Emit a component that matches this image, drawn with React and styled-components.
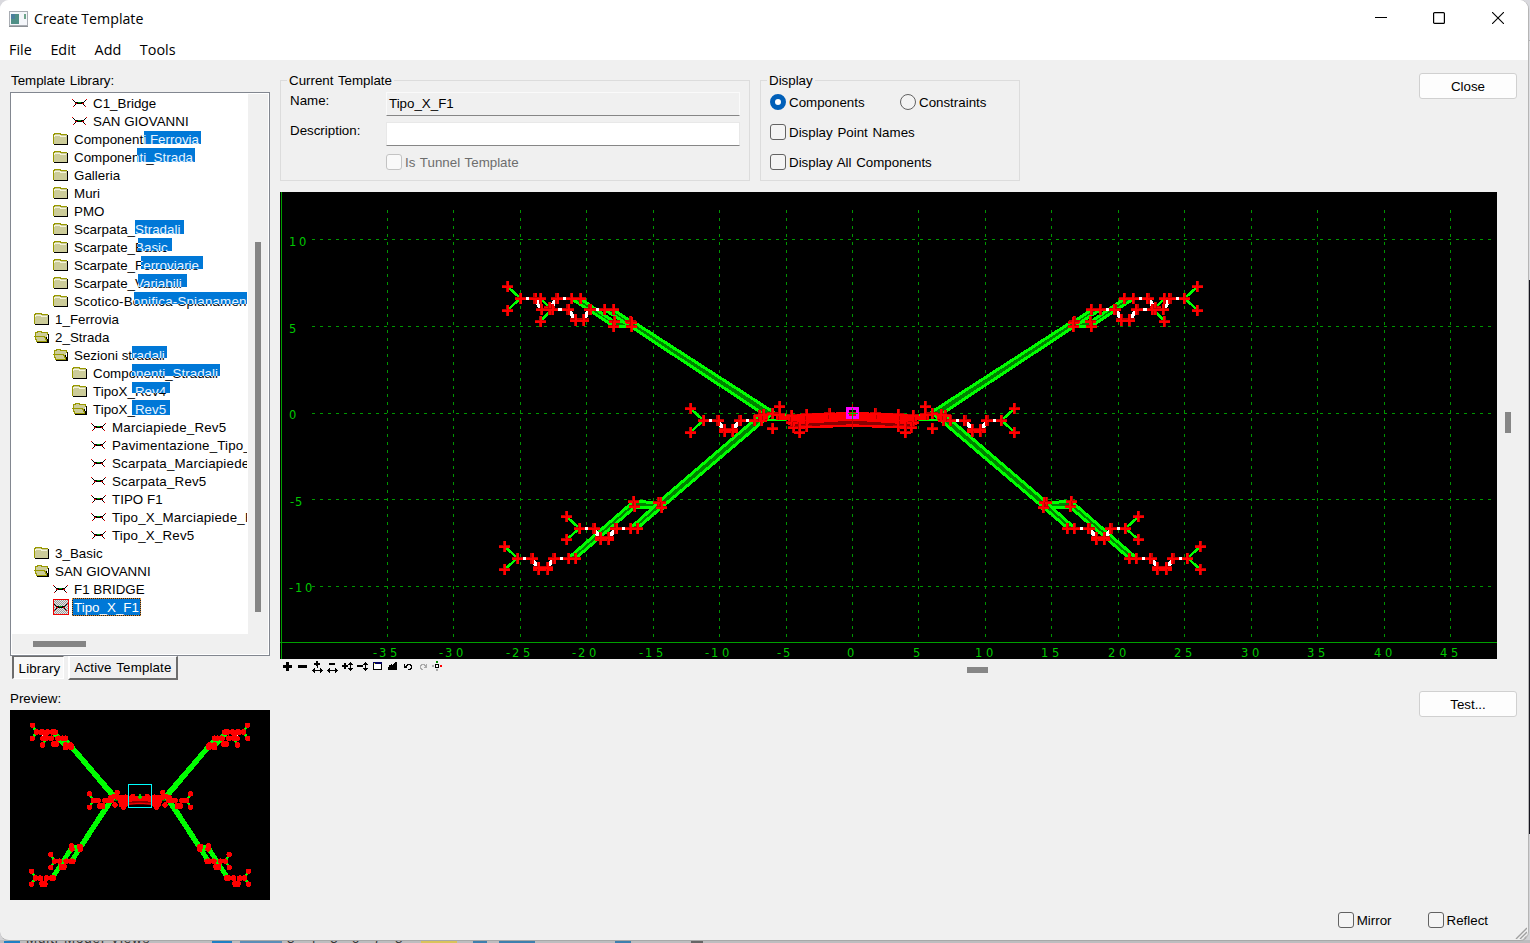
import React from "react";
import styled, { createGlobalStyle, css } from "styled-components";

const GlobalStyle = createGlobalStyle`
  *, *::before, *::after { box-sizing: border-box; }
  html, body { margin: 0; padding: 0; }
  body {
    width: 1530px;
    height: 943px;
    overflow: hidden;
    background: #c9c9cd;
    color: #000;
    font-family: "Liberation Sans", Arial, sans-serif;
    font-size: 13.33px;
    line-height: 17px;
    word-spacing: 1px;
  }
`;

/* ---------- window frame ---------- */

const Desktop = styled.div`
  position: relative;
  width: 1530px;
  height: 943px;
  overflow: hidden;
  background: linear-gradient(#d9d9de 0 40px, #b4b4b8 40px 41px, #dfdfe2 41px 280px, #15151f 280px 834px, #d3d3d6 834px);
`;

const Window = styled.div`
  position: relative;
  display: flex;
  flex-direction: column;
  width: 1529px;
  height: 941px;
  border-right: 1px solid #b5b5b5;
  border-bottom: 1px solid #a8a8a8;
  border-radius: 9px;
  overflow: hidden;
  background: #f0f0f0;
`;

const TitleBar = styled.header`
  display: flex;
  align-items: center;
  height: 37px;
  padding-left: 9px;
  padding-right: 1px;
  background: #fff;
  font-family: "Open Sans", "Noto Sans", sans-serif;
  font-size: 14.2px;
  word-spacing: 0;
`;

const Title = styled.span`
  flex: 1;
  margin-left: 6px;
  white-space: nowrap;
`;

const Caption = styled.span`
  width: 58.5px;
  height: 37px;
  padding-bottom: 1px;
  display: flex;
  align-items: center;
  justify-content: center;
`;

const MenuBar = styled.nav`
  display: flex;
  gap: 18.6px;
  height: 23px;
  padding: 3px 9px 0;
  background: #fff;
  font-family: "Open Sans", "Noto Sans", sans-serif;
  font-size: 14.4px;
  line-height: 19px;
`;

const Content = styled.main`
  flex: 1;
  display: flex;
  gap: 10px;
  padding: 12px 11px 0 10px;
`;

const Sidebar = styled.aside`
  display: flex;
  flex-direction: column;
  width: 260px;
  flex: none;
`;

const SectionName = styled.div`
  height: 17px;
  margin: ${(p) => p.$margin || "0"};
  white-space: nowrap;
`;

/* ---------- library tree ---------- */

const TreeBox = styled.div`
  display: grid;
  grid-template-columns: 236px 20px;
  grid-template-rows: 540px 20px;
  height: 564px;
  border: 1px solid #828790;
  padding: 1px;
  background: #fff;
`;

const TreeView = styled.div`
  overflow: hidden;
  margin-right: 1px;
  word-spacing: 0;
`;

const VTrack = styled.div`
  display: flex;
  justify-content: center;
  background: #f0f0f0;
  padding-top: 148px;
`;

const HTrack = styled.div`
  grid-column: 1 / 3;
  display: flex;
  align-items: center;
  background: #f0f0f0;
  padding-left: 21px;
`;

const Thumb = styled.span`
  width: ${(p) => p.$w}px;
  height: ${(p) => p.$h}px;
  background: #858585;
`;

const TreeRow = styled.div`
  display: flex;
  align-items: center;
  height: 18px;
  padding-left: ${(p) => 3 + p.$level * 19}px;
  white-space: nowrap;
`;

const Label = styled.span`
  position: relative;
  height: 18px;
  line-height: 19.4px;
  margin-left: 3px;
  padding-left: 2px;
  padding-right: 2px;
  letter-spacing: ${(p) => (p.$wide ? 0.2 : 0.03)}px;

  ${(p) =>
    p.$ghost &&
    css`
      &::after {
        content: attr(data-label);
        position: absolute;
        left: 0;
        top: 0;
        width: 260px;
        height: 18px;
        padding-left: 2px;
        background: #0078d7;
        color: #e8f4ff;
        clip-path: inset(
          ${p.$ghost[2]}px ${260 - p.$ghost[1]}px ${18 - p.$ghost[3]}px ${p.$ghost[0]}px
        );
      }
    `}

  ${(p) =>
    p.$selected &&
    css`
      background: #0078d7;
      color: #fff;
      outline: 1px dotted #e08a28;
      outline-offset: -1px;
      box-shadow: inset 0 0 0 1px #10243a;
    `}
`;

const IconSlot = styled.span`
  display: flex;
  width: 16px;
  height: 16px;
  ${(p) =>
    p.$selected &&
    css`
      box-shadow: inset 0 0 0 1px #f00000;
      background: repeating-conic-gradient(#9a9a9a 0 25%, #e6e6e6 0 50%) 0 0 / 2px 2px;
    `}
`;

const Tabs = styled.div`
  display: flex;
  gap: 4px;
  height: 24px;
  padding-left: 2px;
`;

const Tab = styled.div`
  height: ${(p) => (p.$pressed ? 23 : 24)}px;
  width: ${(p) => p.$w}px;
  padding-left: ${(p) => (p.$pressed ? 2 : 0)}px;
  text-align: center;
  white-space: nowrap;
  letter-spacing: 0.15px;
  line-height: ${(p) => (p.$pressed ? 23 : 21)}px;
  ${(p) =>
    p.$pressed
      ? css`
          background: #f8f8f8;
          border-left: 2px solid #6d6d6d;
          border-top: 1px solid #6d6d6d;
          border-right: 1px solid #fff;
          border-bottom: 1px solid #fff;
        `
      : css`
          background: #f0f0f0;
          border-left: 2px solid #fff;
          border-top: 1px solid #fff;
          border-right: 2px solid #6d6d6d;
          border-bottom: 2px solid #6d6d6d;
        `}
`;

const Preview = styled.svg`
  display: block;
  width: 260px;
  height: 190px;
  background: #000;
`;

/* ---------- right pane ---------- */

const Pane = styled.section`
  flex: 1;
  display: flex;
  flex-direction: column;
  min-width: 0;
`;

const TopRow = styled.div`
  display: flex;
  align-items: flex-start;
  gap: 10px;
  height: 120px;
`;

const Group = styled.fieldset`
  width: ${(p) => p.$w}px;
  height: 109px;
  margin: 0;
  padding: 0 0 0 9px;
  border: 1px solid #dcdcdc;
  min-width: 0;
`;

const Legend = styled.legend`
  height: 17px;
  margin-left: -3px;
  padding: 0 2px;
`;

const Field = styled.div`
  display: flex;
  align-items: flex-start;
  margin-top: ${(p) => p.$top}px;
  height: 24px;
`;

const FieldName = styled.span`
  width: 96px;
`;

const Input = styled.div`
  width: 354px;
  height: 24px;
  padding: 0 2px;
  line-height: 22px;
  background: ${(p) => (p.$readOnly ? "#f0f0f0" : "#fff")};
  border: 1px solid ${(p) => (p.$readOnly ? "#fafafa" : "#e8e8e8")};
  border-bottom: 1px solid #868686;
`;

const Options = styled.div`
  display: flex;
  height: 16px;
  margin-top: ${(p) => p.$top || 0}px;
  margin-left: ${(p) => p.$left || 0}px;
`;

const Option = styled.label`
  display: flex;
  align-items: center;
  gap: 3px;
  width: ${(p) => (p.$w ? p.$w + "px" : "auto")};
  white-space: nowrap;
  color: ${(p) => (p.$disabled ? "#6d6d6d" : "#000")};
`;

const Box = styled.span`
  width: 16px;
  height: 16px;
  flex: none;
  border: 1px solid ${(p) => (p.$disabled ? "#c3c3c3" : "#626262")};
  border-radius: 3px;
  background: ${(p) => (p.$disabled ? "#f9f9f9" : "#f4f4f4")};
`;

const Radio = styled.span`
  width: 16px;
  height: 16px;
  flex: none;
  border-radius: 50%;
  border: ${(p) => (p.$on ? "5px solid #005fb8" : "1px solid #626262")};
  background: ${(p) => (p.$on ? "#fff" : "#f3f3f3")};
`;

const Button = styled.div`
  width: 98px;
  height: 26px;
  margin: ${(p) => p.$margin};
  border: 1px solid #d0d0d0;
  border-radius: 3px;
  background: #fdfdfd;
  text-align: center;
  line-height: 25px;
`;

const CanvasRow = styled.div`
  display: flex;
  align-items: center;
  gap: 8px;
  height: 467px;
`;

const Plot = styled.svg`
  display: block;
  width: 1217px;
  height: 467px;
  background: #000;
  flex: none;
`;

const ToolRow = styled.div`
  display: flex;
  height: 15px;
`;

const Tools = styled.div`
  display: flex;
  width: 687px;
`;

const HGrip = styled.span`
  width: 21px;
  height: 6px;
  margin-top: 8px;
  background: #868686;
`;

const VGrip = styled.span`
  width: 6px;
  height: 21px;
  margin-bottom: 6px;
  background: #868686;
`;

const Footer = styled.div`
  display: flex;
  justify-content: flex-end;
  gap: 36px;
  margin-top: auto;
  padding: 0 29px 12px 0;
  height: 28px;
`;

const SizeGrip = styled.svg`
  position: absolute;
  right: 1px;
  bottom: 1px;
`;

const Behind = styled.div`
  position: absolute;
  left: 0;
  bottom: 0;
  width: 1530px;
  height: 3px;
  overflow: hidden;
  background: #bdbdbf;
  display: flex;
  align-items: flex-end;
  font-size: 13.33px;
  color: #333;
`;

const BehindText = styled.span`
  width: ${(p) => p.$w}px;
  height: 11px;
  margin-left: ${(p) => p.$left}px;
  letter-spacing: ${(p) => p.$spacing || 0}px;
  line-height: 14px;
  white-space: nowrap;
`;

const BehindMark = styled.span`
  width: ${(p) => p.$w}px;
  height: 2px;
  margin-left: ${(p) => p.$left}px;
  background: ${(p) => p.$c};
`;

/* ---------- icons ---------- */

const FolderIcon = () => (
  <svg width="16" height="16" shapeRendering="crispEdges">
    <path d="M0 3H2V2H7V3H8V4H14V13H0Z" fill="#cccc99" />
    <path d="M0.5 13V3.5H1.5V2.5H7.5V3.5H13.5" fill="none" stroke="#999900" />
    <path d="M1.5 6V4.5H7.5V5.5H12.5" fill="none" stroke="#f4f4dc" />
    <path d="M14.5 4V13.5H1" fill="none" stroke="#000" />
  </svg>
);

const OpenFolderIcon = () => (
  <svg width="16" height="16" shapeRendering="crispEdges">
    <path d="M1 4H3V2H7V3H13V13H3L1 10Z" fill="#cccc99" />
    <path d="M1.5 7V3.5H3.5V2.5H7.5V3.5H13.5V6" fill="none" stroke="#999900" />
    <path d="M0 7.5H10.5V8.5H11.5V10.5H12.5V12.5H2.5V10.5H1.5V8.5H0.5" fill="none" stroke="#999900" />
    <path d="M14.5 5V13.5H3M12.5 8V10M13.5 10V13" fill="none" stroke="#000" />
  </svg>
);

const TemplateIcon = () => (
  <svg width="16" height="16" viewBox="0 -1 16 16" shapeRendering="crispEdges">
    <path d="M1 4.5H2M2 5.5H3M3 6.5H5M5 6.5H10M10 6.5H12M12 5.5H13M13 4.5H14M4 7.5H11M3 8.5H4M2 9.5H3M11 8.5H12M12 9.5H13" stroke="#000" />
    <path d="M0 3.5H1M14 3.5H15M1 10.5H2M13 10.5H14M3 7.5H5M10 7.5H12" stroke="#e00000" />
    <path d="M6 6.5H9" stroke="#00a000" />
  </svg>
);

const AppIcon = () => (
  <svg width="19" height="16">
    <rect x="0.5" y="0.5" width="18" height="14" fill="#f4f6fa" stroke="#a9adb3" />
    <rect x="2" y="3" width="8" height="10" fill="#4f8f86" />
    <rect x="2" y="3" width="4" height="5" fill="#4a7f9c" />
    <rect x="15" y="3" width="2" height="5" fill="#6fa58c" />
    <path d="M0 15.5H19" stroke="#8b8f94" />
  </svg>
);

const HArrow = () => (
  <path d="M2 11H3V10H4V9H5V11H10V9H11V10H12V11H13V12H12V13H11V14H10V12H5V14H4V13H3V12H2Z" fill="#000" stroke="none" />
);
const VArrow = () => (
  <path d="M10 3H11V4H12V5H13V6H11V9H13V10H12V11H11V12H10V11H9V10H8V9H10V6H8V5H9V4H10Z" fill="#000" stroke="none" />
);

const toolIcons = [
  <path d="M7.5 3V12M3 7.5H12" stroke="#000" strokeWidth="3" />,
  <path d="M3 7.5H12" stroke="#000" strokeWidth="3" />,
  <g stroke="#000" fill="none">
    <path d="M7 2V7M4 5H10" strokeWidth="2" />
    <path d="M7.5 7V9" />
    <HArrow />
  </g>,
  <g stroke="#000" fill="none">
    <path d="M4 5H10" strokeWidth="2" />
    <HArrow />
  </g>,
  <g stroke="#000" fill="none">
    <path d="M5 4V10M2 7H8" strokeWidth="2" />
    <VArrow />
  </g>,
  <g stroke="#000" fill="none">
    <path d="M2 7H8" strokeWidth="2" />
    <VArrow />
  </g>,
  <g>
    <rect x="3.5" y="3.5" width="8" height="7" fill="#fff" stroke="#000" />
    <path d="M3 4H12" stroke="#000060" strokeWidth="2" />
    <path d="M4 4.5H5" stroke="#ff0" />
  </g>,
  <path d="M3 11V8H4V6H6V5H7V6H8V5H9V4H10V3H12V11Z" fill="#000" />,
  <path d="M4.5 5V8.5H7M5 7.5H6V6.5H7V5.5H10V6.5H11V9.5H10V10.5H8" fill="none" stroke="#000" />,
  <path d="M11.5 5V8.5H9M10.5 7.5V6.5H9V5.5H6V6.5H5V9.5H6V10.5H8" fill="none" stroke="#aaa" />,
  <g>
    <rect x="5.5" y="5.5" width="3" height="3" fill="#fff" stroke="#000" />
    <path d="M6 2.5H8M6 3.5H8" stroke="#080" />
    <path d="M10 6.5H12M10 7.5H12" stroke="#f00" />
    <path d="M2 6.5H4M2 7.5H4M6 11.5H8M6 10.5H8" stroke="#aaa" />
  </g>,
];

/* ---------- cross-section geometry (left half, mirrored about x = 852.5) ---------- */

const AXIS = 852.5;

const points = [
  [507.5, 286.5], [507.5, 310], [520.5, 298.5], [534.5, 298.5], [535.5, 298.5], [540.5, 298.5],
  [556.5, 298.5], [557.5, 298.5], [571.5, 298.5], [580.5, 298.5], [541.5, 309.5], [549.5, 307.5],
  [549.5, 309.5], [552.5, 309.5], [540.5, 321.5], [567.5, 309.5], [568.5, 309.5], [575.5, 319.5], [583.5, 319.5],
  [575.5, 320.5], [583.5, 320.5],
  [589.5, 309.5], [590.5, 309.5], [604.5, 309.5], [613.5, 309.5], [614.5, 321.5], [613.5, 326.5], [630.5, 321.5],
  [631.5, 322.5], [631.5, 326.5],
  [504.5, 546.5], [504.5, 569.5], [517.5, 558.5], [531.5, 558.5], [532.5, 558.5], [538.5, 569.5], [547.5, 569.5],
  [538.5, 567.5], [547.5, 567.5], [553.5, 558.5], [554.5, 558.5], [568.5, 558.5], [575.5, 558.5],
  [566.5, 516.5], [566.5, 539.5], [579.5, 528.5], [593.5, 528.5], [594.5, 528.5], [600.5, 539.5],
  [608.5, 539.5], [600.5, 537.5], [608.5, 537.5], [615.5, 528.5], [616.5, 528.5], [630.5, 528.5], [637.5, 528.5],
  [633.5, 501.5], [634.5, 506.5], [658.5, 502.5], [660.5, 502.5], [661.5, 507.5],
  [690.5, 408.5], [690.5, 432.5], [703.5, 420.5], [717.5, 420.5], [718.5, 420.5], [724.5, 431.5],
  [732.5, 431.5], [724.5, 429.5], [732.5, 429.5], [739.5, 420.5], [740.5, 420.5], [754.5, 420.5], [761.5, 420.5],
  [759.5, 415.5], [763.5, 414.5], [772.5, 413.5], [772.5, 428.5], [779.5, 406.5], [779.5, 414.5],
  [791.5, 415.5], [791.5, 422.5], [793.5, 427.5], [799.5, 427.5], [799.5, 432.5], [806.5, 414.5], [806.5, 426.5],
  [829.5, 413.5],
];

const whites = [
  "520,298.5 535,298.5 541.5,309.5 550,309.5 556.5,298.5 571,298.5",
  "552,309.5 568,309.5 575.5,320 583.5,320 589.5,309.5 604,309.5",
  "517.5,558.5 531.5,558.5 538.5,568 547,568 553.5,558.5 568,558.5",
  "579.5,528.5 593.5,528.5 600.5,538.5 608.5,538.5 615.5,528.5 630,528.5",
  "703.5,420.5 717.5,420.5 724.5,430.5 732.5,430.5 739.5,420.5 754,420.5",
];

const branches = [
  "507.5,286.5 520.5,298.5 507.5,310",
  "540.5,298.5 552,309.5 540.5,321",
  "504.5,546.5 517.5,558 504.5,569.5",
  "566.5,516.5 579.5,528.5 566.5,539.5",
  "690.5,408.5 703.5,420.5 690.5,432",
];

const bands = [
  "571,298.5 613.5,326 631,326 630,321.5 614,321.5 580,298.5",
  "604.5,309.5 613,309.5 632,322 630,326",
  "632,321 774,412.5 768,417 630,326",
  "658,502.5 759,416 767,418 661,508",
  "633.5,501.5 568.5,558 576,558 635,507 661,508 658,502.5",
  "657,504 630,528.5 637,528.5 662,507",
];

const HalfSection = ({ small }) => (
  <g>
    {bands.map((b) => (
      <polygon key={b} points={b} fill={small ? "#00ff00" : "#008000"} stroke="#00ff00" strokeWidth={small ? 2.8 : 3} vectorEffect="non-scaling-stroke" />
    ))}
    {branches.map((b) => (
      <polyline key={b} points={b} fill="none" stroke="#00ff00" strokeWidth="2.4" vectorEffect="non-scaling-stroke" />
    ))}
    {whites.map((b) => {
      const q = b.split(" ");
      return (
        <g key={b} fill="none" stroke="#fff">
          <polyline points={b} strokeWidth={small ? 1 : 2.6} vectorEffect="non-scaling-stroke" />
          {!small && <path d={`M${q[1]}L${q[2]}M${q[3]}L${q[4]}`} strokeWidth="4" />}
        </g>
      );
    })}
    <path d="M764 415H790M764 419.5H786" stroke="#00ff00" strokeWidth="2" />
    <path d="M758 417.5H768M776 417.5H790" stroke="#f00" strokeWidth="4" />
    {points.map(([x, y], i) =>
      small ? (
        <ellipse key={i} cx={x} cy={y} rx="8.8" ry="4.9" fill="#f00" />
      ) : (
        <g key={i} fill="none">
          <path d={`M${x - 5.5} ${y}h11M${x} ${y - 5.5}v11`} stroke="#c00000" strokeWidth="2.8" />
          <path d={`M${x - 5.5} ${y + 0.5}h11M${x + 0.5} ${y - 5.5}v11`} stroke="#ff0000" strokeWidth="2" />
        </g>
      )
    )}
  </g>
);

const Section = ({ small }) => (
  <g>
    <polygon points="791,422 852.5,419 914,422 914,427 852.5,425 791,427" fill="#8b0000" />
    <polygon points="788,414 852.5,412 917,414 917,425 852.5,420.5 788,425" fill="#ff0000" />
    <polyline points="788,428 852.5,425.5 917,428" fill="none" stroke="#f00" strokeWidth="2.5" />
    <HalfSection small={small} />
    <g transform={`translate(${AXIS * 2} 0) scale(-1 1)`}>
      <HalfSection small={small} />
    </g>
  </g>
);

const vGrid = [];
for (let k = -7; k <= 9; k++) vGrid.push(k);

const axisText = (k) => {
  const t = Math.round(AXIS + k * 66.45 - 0.5);
  const n = k * 5;
  const s = String(n);
  const xs = s.length === 1 ? [t - 5] : s === "-5" ? [t - 9, t - 3] : n < 0 ? [t - 14, t - 8, t + 3] : [t - 10, t + 1];
  return { s, x: xs.join(" ") };
};

const TemplatePlot = () => (
  <Plot viewBox="280 192 1217 467">
    <g shapeRendering="crispEdges">
      {vGrid.map((k) => {
        const x = Math.round(AXIS + k * 66.45 - 0.5) + 0.5;
        return <path key={k} d={`M${x} 210V642`} stroke="#009600" strokeDasharray="3 5" />;
      })}
      {[239.5, 326.5, 413.5, 499.5, 586.5].map((y) => (
        <path key={y} d={`M312 ${y}H1493`} stroke="#009600" strokeDasharray="3 5" />
      ))}
      <path d="M280 642.5H1497M281.5 192V659" stroke="#00a000" />
      <Section />
      <path d="M852.5 404V429M829.5 408V413M875.5 408V413" stroke="#c00" />
      <rect x="847.5" y="408.5" width="10" height="9" fill="none" stroke="#ff00ff" strokeWidth="3" />
      <path d="M852.5 408V419M848 413.5H858" stroke="#00c000" strokeWidth="1" />
    </g>
    <g fill="#00c800" fontFamily="DejaVu Sans" fontSize="11.5" wordSpacing="0">
      {vGrid.map((k) => {
        const a = axisText(k);
        return <text key={k} x={a.x} y="657">{a.s}</text>;
      })}
      <text x="289 299" y="246">10</text>
      <text x="289" y="333">5</text>
      <text x="289" y="419">0</text>
      <text x="290 295" y="506">-5</text>
      <text x="289 295 305" y="592">-10</text>
    </g>
  </Plot>
);

const TemplatePreview = () => (
  <Preview viewBox="10 710 260 190">
    <g shapeRendering="crispEdges">
      <g transform={`translate(${140 - AXIS * 0.312} ${725.3 - 286.5 * 0.5615}) scale(0.312 0.5615)`}>
        <Section small />
      </g>
      <rect x="128.5" y="784.5" width="23" height="23" fill="none" stroke="#00ffff" />
      <path d="M140 794V799M138 796.5H142" stroke="#00e000" strokeWidth="2" />
    </g>
  </Preview>
);

/* ---------- tree data: kind, level, label, highlight [x1, x2, y1, y2], selected ---------- */

const rows = [
  ["t", 3, "C1_Bridge"],
  ["t", 3, "SAN GIOVANNI"],
  ["f", 2, "Componenti Ferrovia", [72, 129, 1, 14]],
  ["f", 2, "Componenti_Strada", [65, 123, 0, 14]],
  ["f", 2, "Galleria"],
  ["f", 2, "Muri"],
  ["f", 2, "PMO"],
  ["f", 2, "Scarpata_Stradali", [63, 112, 0, 14]],
  ["f", 2, "Scarpate_Basic", [66, 100, 0, 13]],
  ["f", 2, "Scarpate_Ferroviarie", [69, 131, 0, 13]],
  ["f", 2, "Scarpate_Variabili", [66, 115, 0, 13]],
  ["f", 2, "Scotico-Bonifica-Spianament", [62, 175, 0, 12]],
  ["f", 1, "1_Ferrovia"],
  ["o", 1, "2_Strada"],
  ["o", 2, "Sezioni stradali", [60, 95, 0, 12]],
  ["f", 3, "Componenti_Stradali", [41, 129, 0, 12]],
  ["f", 3, "TipoX_Rev4", [41, 79, 0, 11]],
  ["o", 3, "TipoX_Rev5", [41, 79, 0, 15]],
  ["t", 4, "Marciapiede_Rev5"],
  ["t", 4, "Pavimentazione_Tipo_"],
  ["t", 4, "Scarpata_Marciapiede"],
  ["t", 4, "Scarpata_Rev5"],
  ["t", 4, "TIPO F1"],
  ["t", 4, "Tipo_X_Marciapiede_R"],
  ["t", 4, "Tipo_X_Rev5"],
  ["f", 1, "3_Basic"],
  ["o", 1, "SAN GIOVANNI"],
  ["t", 2, "F1 BRIDGE"],
  ["t", 2, "Tipo_X_F1", null, true],
];

const icons = { t: TemplateIcon, f: FolderIcon, o: OpenFolderIcon };

export default function App() {
  return (
    <Desktop>
      <GlobalStyle />
      <Behind>
        <BehindMark $left={4} $w={16} $c="#1f7fc4" />
        <BehindText $left={6} $w={124} $spacing={0.9}>Multi-Model Views</BehindText>
        <BehindMark $left={62} $w={20} $c="#1f7fc4" />
        <BehindMark $left={8} $w={42} $c="#5a8db8" />
        <BehindText $left={5} $w={120} $spacing={14.2}>345678</BehindText>
        <BehindMark $left={14} $w={36} $c="#d9c35a" />
        <BehindMark $left={16} $w={14} $c="#3d7fae" />
        <BehindMark $left={12} $w={36} $c="#3d7fae" />
        <BehindMark $left={80} $w={16} $c="#3d7fae" />
        <BehindMark $left={60} $w={12} $c="#666" />
      </Behind>
      <Window>
        <TitleBar>
          <AppIcon />
          <Title>Create Template</Title>
          <Caption>
            <svg width="12" height="12"><path d="M0 5.5H12" stroke="#000" /></svg>
          </Caption>
          <Caption>
            <svg width="12" height="12"><rect x="0.6" y="0.6" width="10.8" height="10.8" rx="1" fill="none" stroke="#000" strokeWidth="1.2" /></svg>
          </Caption>
          <Caption>
            <svg width="12" height="12"><path d="M0 0L12 12M12 0L0 12" stroke="#000" strokeWidth="1.1" /></svg>
          </Caption>
        </TitleBar>
        <MenuBar>
          <span>File</span>
          <span>Edit</span>
          <span>Add</span>
          <span>Tools</span>
        </MenuBar>
        <Content>
          <Sidebar>
            <SectionName $margin="0 0 3px 1px">Template Library:</SectionName>
            <TreeBox>
              <TreeView>
                {rows.map(([kind, level, label, ghost, selected], i) => {
                  const Icon = icons[kind];
                  const wide = (level === 4 && label.includes("_")) || label.startsWith("Scotico");
                  return (
                    <TreeRow key={i} $level={level}>
                      <IconSlot $selected={selected}><Icon /></IconSlot>
                      <Label $wide={wide} $ghost={ghost} $selected={selected} data-label={label}>{label}</Label>
                    </TreeRow>
                  );
                })}
              </TreeView>
              <VTrack><Thumb $w={6} $h={370} /></VTrack>
              <HTrack><Thumb $w={53} $h={6} /></HTrack>
            </TreeBox>
            <Tabs>
              <Tab $pressed $w={52}>Library</Tab>
              <Tab $w={110}>Active Template</Tab>
            </Tabs>
            <SectionName $margin="10px 0 3px 0">Preview:</SectionName>
            <TemplatePreview />
          </Sidebar>
          <Pane>
            <TopRow>
              <Group $w={470}>
                <Legend>Current Template</Legend>
                <Field $top={3}>
                  <FieldName>Name:</FieldName>
                  <Input $readOnly>Tipo_X_F1</Input>
                </Field>
                <Field $top={6}>
                  <FieldName>Description:</FieldName>
                  <Input />
                </Field>
                <Options $top={8} $left={96}>
                  <Option $disabled><Box $disabled />Is Tunnel Template</Option>
                </Options>
              </Group>
              <Group $w={260}>
                <Legend>Display</Legend>
                <Options $top={5}>
                  <Option $w={130}><Radio $on />Components</Option>
                  <Option><Radio />Constraints</Option>
                </Options>
                <Options $top={14}><Option><Box />Display Point Names</Option></Options>
                <Options $top={14}><Option><Box />Display All Components</Option></Options>
              </Group>
              <Button $margin="1px 0 0 auto">Close</Button>
            </TopRow>
            <CanvasRow>
              <TemplatePlot />
              <VGrip />
            </CanvasRow>
            <ToolRow>
              <Tools>
                {toolIcons.map((icon, i) => (
                  <svg key={i} width="15" height="15" shapeRendering="crispEdges">{icon}</svg>
                ))}
              </Tools>
              <HGrip />
            </ToolRow>
            <Button $margin="17px 0 0 auto">Test...</Button>
            <Footer>
              <Option><Box />Mirror</Option>
              <Option><Box />Reflect</Option>
            </Footer>
          </Pane>
        </Content>
        <SizeGrip width="12" height="12">
          <path d="M12 1L1 12M12 5L5 12M12 9L9 12" stroke="#a0a0a0" strokeWidth="1.4" />
        </SizeGrip>
      </Window>
    </Desktop>
  );
}
